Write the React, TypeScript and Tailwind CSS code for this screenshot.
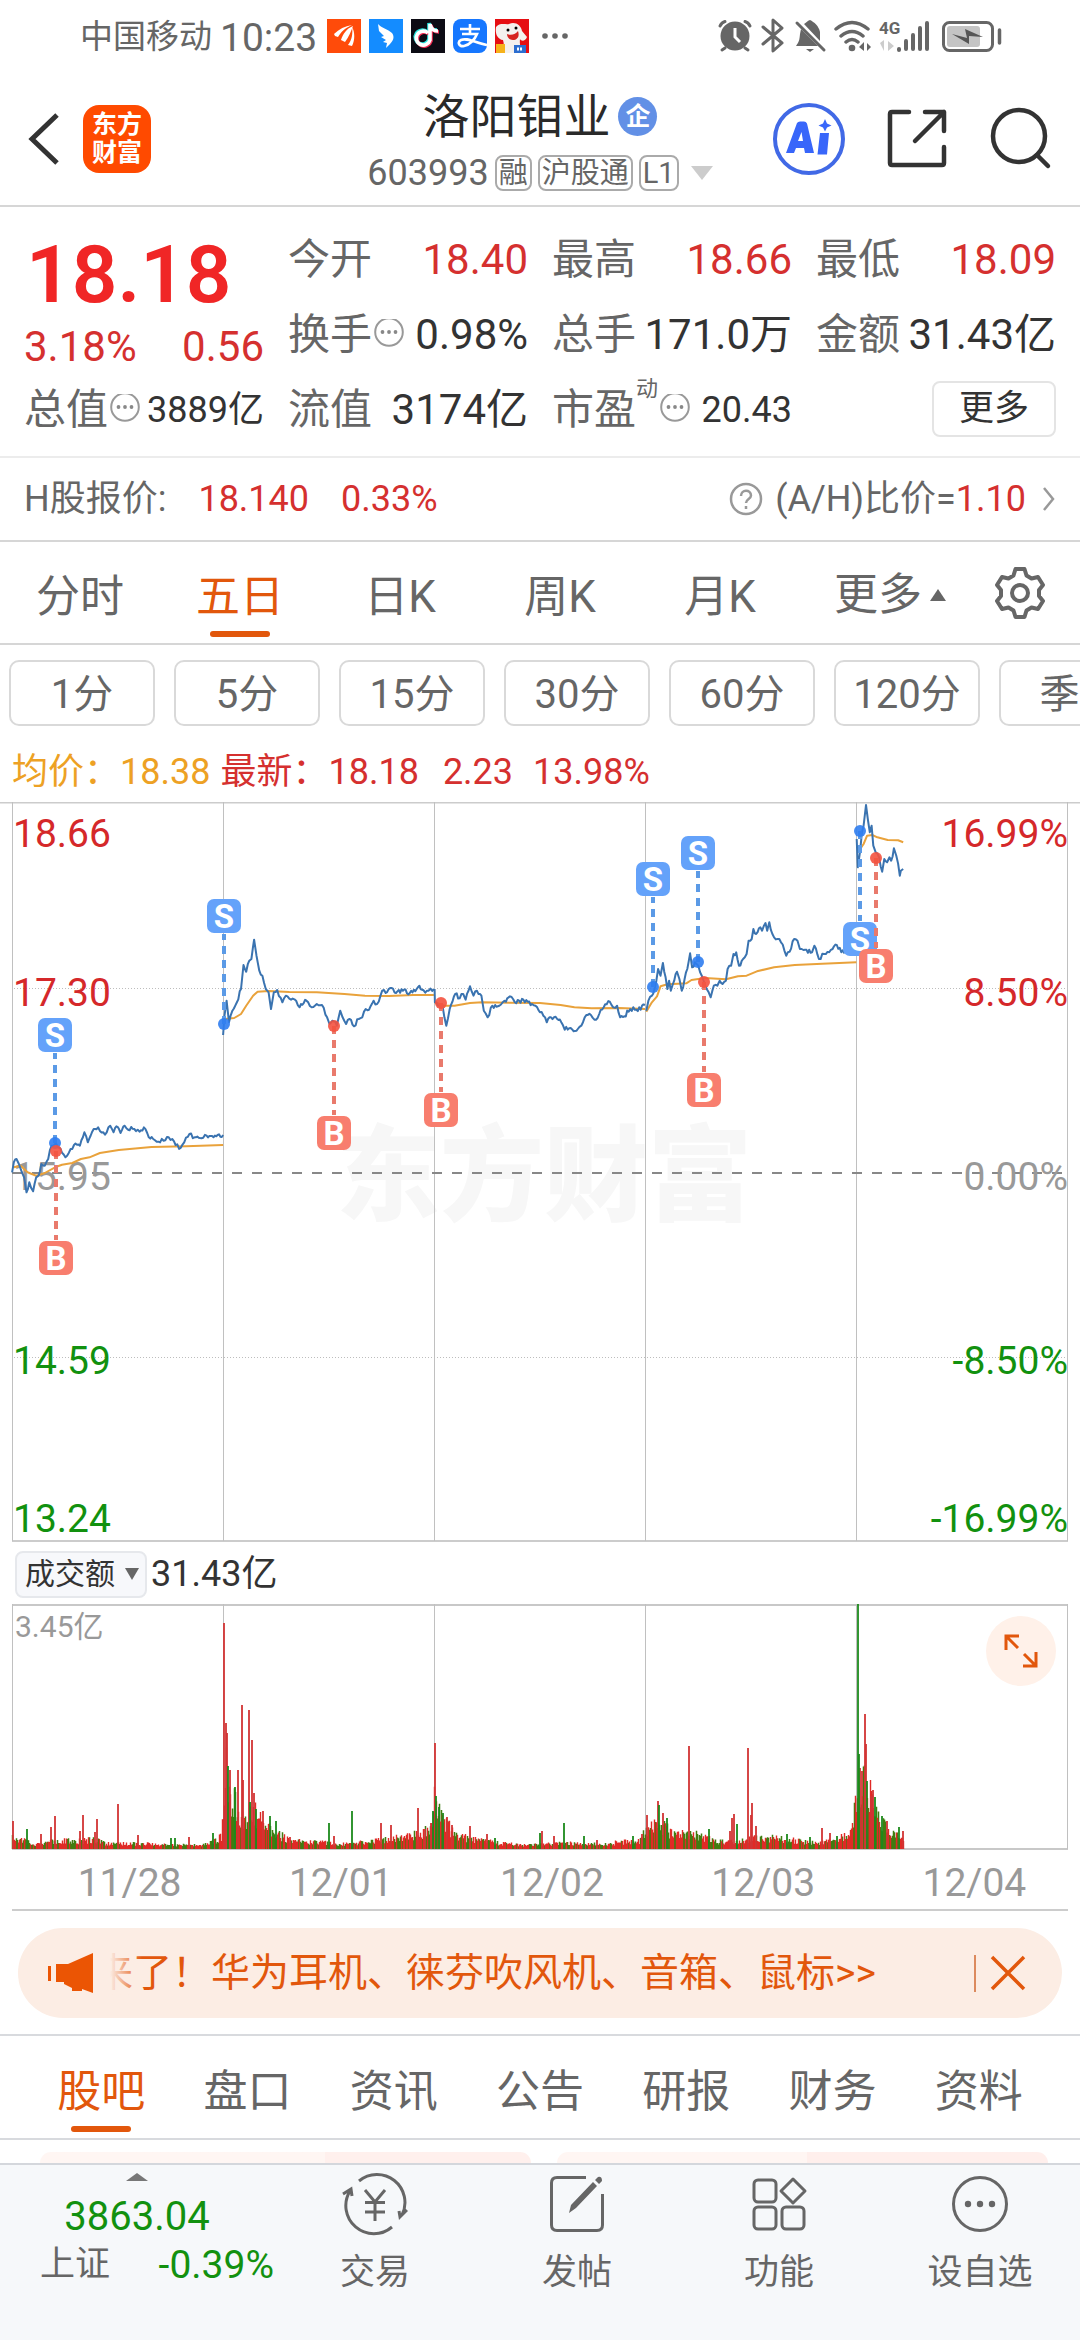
import React, { useMemo, useState } from "react";

type Pt = [number, number];

/* Price series: x and y on the plotting grid, one list for each trading day. */
const GX = 2.904;
const GY = 3;

const PRICE: Pt[][] = [
  [[35,1150],[40,1120],[48,1110],[55,1125],[62,1145],[70,1165],[77,1210],[85,1180],[96,1207],[105,1165],[112,1160],[120,1125],[130,1130],[140,1110],[150,1070],[160,1065],[168,1075],[175,1078],[190,1105],[205,1080],[215,1068],[232,1070],[245,1030],[255,1060],[272,1020],[285,1015],[300,1030],[310,1030],[320,1010],[330,1030],[338,1012],[350,1032],[362,1010],[372,1022],[390,1020],[405,1028],[418,1015],[432,1045],[445,1050],[460,1058],[475,1055],[485,1044],[500,1050],[510,1068],[525,1076],[535,1060],[550,1035],[565,1045],[585,1048],[600,1040],[620,1045],[632,1038],[648,1038]],
  [[648,738],[652,680],[658,635],[665,700],[675,665],[688,640],[700,600],[707,528],[715,548],[724,515],[730,510],[738,452],[745,500],[753,545],[762,560],[772,600],[780,610],[787,660],[795,610],[805,603],[820,640],[830,620],[845,632],[860,635],[870,655],[890,635],[905,655],[920,645],[935,648],[950,685],[957,705],[965,695],[978,710],[988,665],[995,685],[1005,705],[1015,690],[1028,712],[1042,690],[1052,685],[1062,660],[1072,662],[1085,635],[1095,645],[1110,605],[1120,612],[1137,597],[1150,612],[1170,605],[1190,612],[1210,600],[1218,590],[1230,604],[1245,605],[1260,600]],
  [[1262,600],[1263,640],[1275,650],[1285,650],[1296,710],[1306,660],[1322,615],[1335,628],[1345,615],[1352,632],[1365,592],[1375,620],[1385,605],[1398,620],[1405,665],[1416,685],[1430,650],[1450,650],[1465,635],[1481,622],[1495,640],[1520,632],[1545,645],[1560,655],[1568,670],[1578,680],[1588,700],[1600,685],[1618,690],[1630,700],[1640,722],[1653,718],[1666,727],[1678,720],[1688,710],[1698,685],[1716,678],[1726,692],[1740,675],[1753,655],[1771,638],[1781,655],[1792,650],[1801,685],[1813,682],[1830,660],[1848,662],[1873,648]],
  [[1877,665],[1883,635],[1893,620],[1901,600],[1911,540],[1918,560],[1925,522],[1933,565],[1938,600],[1943,575],[1948,605],[1958,575],[1966,548],[1973,570],[1980,605],[1988,570],[1996,540],[2004,493],[2010,535],[2018,520],[2028,530],[2038,560],[2048,590],[2058,610],[2064,625],[2073,590],[2083,590],[2090,575],[2098,585],[2108,575],[2113,540],[2123,530],[2130,495],[2138,490],[2146,530],[2158,510],[2168,495],[2174,455],[2183,450],[2188,420],[2196,435],[2208,415],[2213,425],[2223,402],[2228,425],[2234,400],[2243,435],[2258,450],[2268,460],[2283,500],[2293,488],[2306,450],[2316,455],[2323,480],[2338,482],[2358,490],[2365,470],[2378,510],[2393,495],[2408,490],[2418,480],[2430,468],[2443,490],[2463,480],[2478,475],[2487,470]],
  [[2488,150],[2491,235],[2498,185],[2503,130],[2508,110],[2515,48],[2520,90],[2526,130],[2531,110],[2536,170],[2543,190],[2553,205],[2562,248],[2568,210],[2576,220],[2583,205],[2588,215],[2596,178],[2603,200],[2613,260],[2616,245],[2623,240]],
];

const AVERAGE: Pt[][] = [
  [[40,1135],[60,1130],[80,1150],[105,1160],[130,1152],[160,1135],[180,1127],[210,1122],[235,1110],[260,1105],[290,1092],[345,1083],[440,1074],[540,1072],[648,1068]],
  [[652,690],[680,687],[700,675],[715,650],[735,620],[748,608],[780,606],[840,609],[920,610],[1000,615],[1060,620],[1130,621],[1200,618],[1260,618]],
  [[1262,640],[1290,650],[1320,650],[1365,642],[1400,640],[1480,641],[1568,642],[1628,648],[1668,655],[1718,658],[1798,657],[1873,660]],
  [[1877,668],[1893,640],[1908,622],[1918,592],[1938,586],[1968,584],[1993,583],[2008,573],[2048,567],[2108,571],[2143,562],[2168,560],[2198,547],[2248,535],[2308,528],[2388,524],[2487,520]],
  [[2498,180],[2508,165],[2518,140],[2533,138],[2548,145],[2578,153],[2608,154],[2623,160]],
];

function random(seed: number) {
  let s = seed;
  return () => {
    s = (s * 1664525 + 1013904223) % 4294967296;
    return s / 4294967296;
  };
}

function linePath(points: Pt[], jitter: number, seed: number) {
  const rnd = random(seed);
  const out: string[] = [];
  points.forEach(([x, y], i) => {
    out.push(`${i ? "L" : "M"}${(x / GX).toFixed(1)} ${(y / GY - 13).toFixed(1)}`);
    const next = points[i + 1];
    if (next && jitter) {
      const n = Math.floor((next[0] - x) / 4);
      for (let k = 1; k < n; k++) {
        const t = k / n;
        const px = x + (next[0] - x) * t;
        const py = y + (next[1] - y) * t + (rnd() - 0.5) * jitter;
        out.push(`L${(px / GX).toFixed(1)} ${(py / GY - 13).toFixed(1)}`);
      }
    }
  });
  return out.join("");
}

/* Volume: the usual level along the axis, then the single tall bars. */
const LEVEL: Pt[] = [[12,12],[27,9],[35,5],[60,9],[75,8],[95,10],[110,5],[140,6],[170,4],[200,4],[215,8],[222,14],[226,85],[230,60],[240,35],[245,30],[252,40],[262,28],[275,18],[290,8],[320,7],[345,5],[380,9],[410,13],[430,20],[434,50],[440,38],[447,26],[455,14],[470,11],[500,6],[530,4],[560,6],[600,5],[640,9],[650,25],[660,28],[670,18],[685,15],[700,14],[715,8],[740,8],[760,12],[785,10],[820,6],[850,14],[856,50],[866,70],[872,50],[880,28],[890,16],[904,12]];

const SPIKES: [number, number, "r" | "g"][] = [
  [13,28,"r"],[27,20,"g"],[41,15,"r"],[51,22,"r"],[55,33,"r"],[80,18,"r"],[83,34,"r"],[95,17,"r"],[97,30,"r"],[118,45,"r"],[138,14,"r"],[171,11,"g"],[175,11,"g"],[189,12,"r"],[213,16,"g"],
  [224,226,"r"],[226,126,"r"],[227,116,"r"],[228,83,"g"],[230,79,"r"],[235,62,"g"],[238,79,"r"],[242,144,"r"],[243,69,"r"],[249,139,"r"],[250,47,"g"],[252,109,"r"],[254,56,"r"],[256,40,"g"],[263,38,"r"],[270,33,"g"],[276,28,"g"],[290,12,"r"],[329,26,"g"],[334,13,"r"],[352,38,"g"],[381,26,"r"],[391,24,"r"],[418,41,"r"],[425,20,"r"],[431,26,"r"],[433,38,"g"],
  [435,106,"r"],[436,53,"g"],[439,42,"g"],[443,36,"g"],[447,32,"r"],[452,24,"r"],[470,23,"r"],[487,15,"r"],[495,11,"g"],[540,16,"g"],[542,18,"r"],[554,13,"r"],[564,26,"g"],[584,13,"g"],[597,9,"r"],[633,13,"g"],[642,15,"r"],
  [647,34,"r"],[658,48,"r"],[659,44,"g"],[663,36,"r"],[667,31,"g"],[689,103,"r"],[709,20,"g"],[730,18,"r"],[732,31,"r"],[734,35,"r"],[737,25,"g"],[748,101,"r"],[751,34,"r"],[752,46,"r"],[756,23,"r"],[787,15,"g"],[810,12,"g"],[822,21,"r"],[830,16,"r"],[837,13,"g"],
  [858,245,"g"],[859,95,"g"],[860,81,"r"],[862,78,"r"],[865,135,"r"],[866,105,"r"],[867,68,"g"],[871,53,"r"],[873,59,"r"],[875,52,"g"],[882,33,"g"],[887,28,"r"],[899,22,"g"],[903,18,"r"],
];

function volumePaths() {
  const rnd = random(17);
  let red = "";
  let green = "";
  let k = 0;
  let up = true;
  for (let x = 12.5; x < 904; x += 1) {
    while (k < LEVEL.length - 2 && LEVEL[k + 1][0] < x) k++;
    const [x0, h0] = LEVEL[k];
    const [x1, h1] = LEVEL[k + 1];
    const level = h0 + ((h1 - h0) * (x - x0)) / (x1 - x0);
    if (rnd() < (up ? 0.35 : 0.5)) up = !up;
    const h = Math.max(2, level * (0.55 + rnd() * 0.75));
    const seg = `M${x} 245V${(245 - h).toFixed(1)}`;
    if (up) red += seg;
    else green += seg;
  }
  let redTall = "";
  let greenTall = "";
  SPIKES.forEach(([x, h, c]) => {
    const seg = `M${x} 245V${245 - h}`;
    if (c === "r") redTall += seg;
    else greenTall += seg;
  });
  return { red, green, redTall, greenTall };
}

const COLUMNS = [12.5, 223.5, 434.5, 645.5, 856.5, 1067.5];

const MARKS: { kind: "S" | "B"; x: number; box: number; dot: number }[] = [
  { kind: "S", x: 55, box: 233, dot: 341 },
  { kind: "B", x: 56, box: 456, dot: 349 },
  { kind: "S", x: 224, box: 114, dot: 222 },
  { kind: "B", x: 334, box: 331, dot: 224 },
  { kind: "B", x: 441, box: 308, dot: 201 },
  { kind: "S", x: 653, box: 77, dot: 185 },
  { kind: "S", x: 698, box: 51, dot: 160 },
  { kind: "B", x: 704, box: 288, dot: 180 },
  { kind: "S", x: 860, box: 137, dot: 29 },
  { kind: "B", x: 876, box: 164, dot: 56 },
];

const SCALE: { y: number; price: string; rate: string; color: string }[] = [
  { y: 45, price: "18.66", rate: "16.99%", color: "#d5282a" },
  { y: 204, price: "17.30", rate: "8.50%", color: "#d5282a" },
  { y: 388, price: "15.95", rate: "0.00%", color: "#999999" },
  { y: 572, price: "14.59", rate: "-8.50%", color: "#12910f" },
  { y: 730, price: "13.24", rate: "-16.99%", color: "#12910f" },
];

function PriceChart() {
  return (
    <svg viewBox="0 0 1080 740" className="block h-auto w-full" role="img" aria-label="五日走势">
      <text x="544" y="411" textAnchor="middle" fontSize="104" fontWeight="900" fill="#f7f7f7">东方财富</text>
      <path d="M0 .5H1080M12 739H1068" stroke="#cccccc" strokeWidth="2" />
      {COLUMNS.map((x) => (
        <path key={x} d={`M${x} 0V739`} stroke="#c0c0c0" strokeWidth="1" />
      ))}
      <path d="M14 186.5H1067M14 555.5H1067" stroke="#bdbdbd" strokeDasharray="1 2" />
      <path d="M12 371H1068" stroke="#888888" strokeWidth="2" strokeDasharray="10 10" />
      <g fontSize="39">
        {SCALE.map((s) => (
          <React.Fragment key={s.price}>
            <text x="13" y={s.y} fill={s.color}>{s.price}</text>
            <text x="1068" y={s.y} textAnchor="end" fill={s.color}>{s.rate}</text>
          </React.Fragment>
        ))}
      </g>
      {AVERAGE.map((p, i) => (
        <path key={i} d={linePath(p, 0, 1)} fill="none" stroke="#e9a23b" strokeWidth="2" strokeLinejoin="round" />
      ))}
      {PRICE.map((p, i) => (
        <path key={i} d={linePath(p, 14, i + 3)} fill="none" stroke="#3a73b0" strokeWidth="2" strokeLinejoin="round" />
      ))}
      {MARKS.map((m, i) => {
        const sell = m.kind === "S";
        const edge = m.box < m.dot ? m.box + 18 : m.box - 18;
        return (
          <g key={i}>
            <path d={`M${m.x} ${m.dot}V${edge}`} stroke={sell ? "#5b9ae6" : "#e97a6c"} strokeWidth="4" strokeDasharray="8 6" />
            <circle cx={m.x} cy={m.dot} r="6" fill={sell ? "#2f7df0" : "#f4523f"} fillOpacity="0.9" />
            <rect x={m.x - 17} y={m.box - 17} width="34" height="34" rx="7" fill={sell ? "#64a2fa" : "#f87e6e"} />
            <text x={m.x} y={m.box + 12} textAnchor="middle" fontSize="33" fontWeight="700" fill="#ffffff">{m.kind}</text>
          </g>
        );
      })}
    </svg>
  );
}

function VolumeChart() {
  const v = useMemo(volumePaths, []);
  return (
    <svg viewBox="0 0 1080 246" className="block h-auto w-full" role="img" aria-label="成交额">
      <path d="M12 1H1068M12 245H1068" stroke="#c8c8c8" strokeWidth="2" />
      {COLUMNS.map((x) => (
        <path key={x} d={`M${x} 0V245`} stroke="#c0c0c0" strokeWidth="1" />
      ))}
      <text x="15" y="33" fontSize="30" fill="#999999">3.45亿</text>
      <path d={v.green} stroke="#3f7d10" strokeWidth="1.5" />
      <path d={v.red} stroke="#e02a26" strokeWidth="1.4" />
      <path d={v.redTall} stroke="#d23434" strokeWidth="1.8" />
      <path d={v.greenTall} stroke="#1c8a1c" strokeWidth="1.8" />
    </svg>
  );
}

function InfoDot() {
  return (
    <svg viewBox="0 0 32 32" className="size-8 shrink-0" aria-hidden="true">
      <circle cx="17" cy="13" r="13.8" fill="none" stroke="#999" strokeWidth="2" />
      <g fill="#888"><circle cx="10.5" cy="13" r="1.9" /><circle cx="17" cy="13" r="1.9" /><circle cx="23.5" cy="13" r="1.9" /></g>
    </svg>
  );
}

function Cell({ label, value, tone = "text-[#333333]", info, sup, small }: { label: string; value: string; tone?: string; info?: boolean; sup?: string; small?: boolean }) {
  return (
    <div className="flex items-center pt-0.5">
      <span className="text-[#666666]">{label}</span>
      {sup && <span className="self-start pt-1 text-[22px] leading-6 text-[#666666]">{sup}</span>}
      {info && <InfoDot />}
      <span className={small ? `ml-auto text-4xl ${tone}` : `ml-auto ${tone}`}>{value}</span>
    </div>
  );
}

function StatusBar() {
  return (
    <div className="flex h-[72px] items-center justify-between pr-[76px] pl-20 text-[#666666]">
      <div className="flex items-center">
        <span className="text-[33px]">中国移动</span>
        <span className="ml-2 pt-1 text-[39px]">10:23</span>
        <div className="ml-2.5 flex items-center gap-2">
          <svg viewBox="0 0 34 34" className="size-[34px]"><rect width="34" height="34" fill="#ff4b0a" /><path d="M7 15C12 10 18 7 25 6 18 9 14 13 11 18L8 17ZM14 21C16 15 19 10 26 7 24 12 22 18 18 23ZM21 26C25 21 26 14 25 8 28 13 28 21 25 27Z" fill="#fff" /></svg>
          <svg viewBox="0 0 34 34" className="size-[34px]"><rect width="34" height="34" fill="#148cff" /><path d="M9 5C12 9 19 10 23 14 26 18 24 22 21 25L17 29 18 24 14 23 17 21 12 18 15 17 10 12Z" fill="#fff" /></svg>
          <svg viewBox="0 0 34 34" className="size-[34px]"><rect width="34" height="34" fill="#0c0b14" /><g fill="none" strokeWidth="3.6"><path d="M17 14A7 7 0 1 0 19 21V5C20 10 23 12 27 12" stroke="#2ae6e0" transform="translate(-1 -1)" /><path d="M17 14A7 7 0 1 0 19 21V5C20 10 23 12 27 12" stroke="#f42c54" transform="translate(1 1)" /><path d="M17 14A7 7 0 1 0 19 21V5C20 10 23 12 27 12" stroke="#fff" /></g></svg>
          <svg viewBox="0 0 34 34" className="size-[34px]"><rect width="34" height="34" rx="8" fill="#1677ff" /><path d="M7 10H27M17 5V15M9 15H24C22 20 17 26 11 27 6 28 4 23 8 21 14 18 22 24 34 26" fill="none" stroke="#fff" strokeWidth="2.6" /></svg>
          <svg viewBox="0 0 34 34" className="size-[34px]"><rect width="34" height="34" fill="#e60e12" /><path d="M1 8C5 3 11 6 14 5 20 2 26 6 27 12L32 18C30 23 26 22 25 20 24 30 28 30 28 34H9C9 28 9 24 8 21 2 20 0 14 1 8Z" fill="#f4f1ee" /><path d="M12 15C16 17 21 15 23 12 25 18 22 21 18 21 14 21 12 18 12 15Z" fill="#d6231f" /><circle cx="13" cy="11" r="1.5" /><circle cx="21" cy="9" r="1.5" /><rect x="1" y="25" width="9" height="9" fill="#f6b21b" /><rect x="19" y="26" width="12" height="8" fill="#2c6ed0" /><path d="M22 30H28" stroke="#fff" strokeWidth="3" strokeDasharray="2 1" /></svg>
        </div>
        <svg viewBox="0 0 30 8" className="ml-3 h-2 w-[30px]" fill="#666"><circle cx="4" cy="4" r="2.8" /><circle cx="14" cy="4" r="2.8" /><circle cx="24" cy="4" r="2.8" /></svg>
      </div>
      <svg viewBox="716 16 288 40" className="h-10 w-72" fill="none" stroke="#666" strokeWidth="3" strokeLinecap="round">
        <circle cx="735" cy="36" r="14.5" fill="#666" stroke="none" />
        <path d="M735 28V37L740 42" stroke="#fff" strokeLinecap="butt" />
        <path d="M720 26C721 24 723 22 725 21.500M745 21.500C747 22 749 24 750 26M725 48L722 50M745 48L748 50" />
        <path d="M763 27L782 43 773 51V20L782 28 763 44" strokeLinejoin="round" />
        <path d="M797 23L824 50" />
        <path d="M801 29L818 46H796C799 42 799.500 40 800 34ZM804 24C807 22 807 21 810 20 814 22 819 26 820 32V41Z" fill="#666" stroke="none" />
        <path d="M806 49H814L810 52Z" fill="#666" stroke="none" />
        <path d="M836 29Q852 16 868 29M841 36Q852 27 863 36M846 42Q852 37 858 42" strokeWidth="3.500" />
        <circle cx="852" cy="48" r="3.300" fill="#666" stroke="none" />
        <path d="M859 47L864 42V51ZM871 47L867 43V51Z" fill="#666" stroke="none" />
        <text x="879" y="34" fontSize="17" fontWeight="700" fill="#666" stroke="none">4G</text>
        <path d="M880 43L884 40V51ZM894 46L888 41V51Z" fill="#ccc" stroke="none" />
        <path d="M899 50V49M906 49V41M913 49V35M920 49V28M927 49V23" strokeWidth="4" />
        <rect x="943.500" y="22.500" width="49" height="28" rx="6" strokeWidth="3" />
        <rect x="947" y="26" width="33" height="21" rx="3" fill="#c4c4c4" stroke="none" />
        <path d="M952 34L967 38 965 29 983 37 969 36 969 44Z" fill="#555" stroke="none" />
        <path d="M999.500 30V43" strokeWidth="3.500" />
      </svg>
    </div>
  );
}

function Header() {
  return (
    <header className="grid h-[135px] grid-cols-[1fr_auto_1fr] items-center border-b-2 border-[#d6d6d6] px-[26px]">
      <div className="flex items-center">
        <button aria-label="返回" className="flex w-[57px] items-center">
          <svg viewBox="0 0 40 60" className="h-[60px] w-10"><path d="M31 6L6 30 31 54" fill="none" stroke="#333" strokeWidth="5" /></svg>
        </button>
        <div className="flex size-[68px] flex-col items-center justify-center rounded-2xl bg-[#ff4a00] text-[25px] leading-7 font-bold text-white">
          <span>东方</span><span>财富</span>
        </div>
      </div>
      <div className="flex flex-col items-center pt-3.5">
        <h1 className="flex items-center gap-2 text-[47px] leading-[54px] text-[#2a2a2a]">
          洛阳钼业
          <span className="flex size-[39px] items-center justify-center rounded-full bg-[#6290e6] text-[25px] leading-none font-bold text-white">企</span>
        </h1>
        <div className="flex h-[58px] items-center gap-1.5 text-[29px] leading-8 text-[#666666]">
          <span className="text-4xl">603993</span>
          <span className="rounded-lg border-2 border-[#aaaaaa] px-0.5">融</span>
          <span className="rounded-lg border-2 border-[#aaaaaa] px-0.5">沪股通</span>
          <span className="rounded-lg border-2 border-[#aaaaaa] px-0.5">L1</span>
          <svg viewBox="0 0 22 14" className="ml-1.5 h-3.5 w-[22px]"><path d="M0 0H22L11 14Z" fill="#ccc" /></svg>
        </div>
      </div>
      <div className="flex items-center justify-end gap-[38px]">
        <button aria-label="AI" className="size-[74px]">
          <svg viewBox="0 0 74 74" className="size-full">
            <circle cx="37" cy="37" r="34" fill="none" stroke="#4169e6" strokeWidth="4" />
            <path d="M14 51L25 21Q26 19.500 28 19.500H32Q34 19.500 35 21.500L42 51H33L32 46H24L22 51ZM26 39H31L29.500 30ZM48 31H57L55 52.500H45.500ZM53 17L55 21.500 59.500 23.500 55 25.500 53 29.500 51 25.500 46.500 23.500 51 21.500Z" fill="#3866fa" />
          </svg>
        </button>
        <button aria-label="分享" className="size-[66px]">
          <svg viewBox="0 0 66 66" className="size-full" fill="none" stroke="#333" strokeWidth="4.500" strokeLinecap="round" strokeLinejoin="round"><path d="M25 6H8Q6 6 6 8V57Q6 59 8 59H58Q60 59 60 57V41M41 6H60V25M60 6L31 35" /></svg>
        </button>
        <button aria-label="搜索" className="size-[66px]">
          <svg viewBox="0 0 66 66" className="size-full" fill="none" stroke="#333" strokeWidth="4.500" strokeLinecap="round"><circle cx="31" cy="30" r="26" /><path d="M49 49L60 60" /></svg>
        </button>
      </div>
    </header>
  );
}

const PERIODS = ["分时", "五日", "日K", "周K", "月K"];
const MINUTES = ["1分", "5分", "15分", "30分", "60分", "120分", "季K"];
const SECTIONS = ["股吧", "盘口", "资讯", "公告", "研报", "财务", "资料"];
const DATES = ["11/28", "12/01", "12/02", "12/03", "12/04"];

function Tab({ label, active, onClick }: { label: string; active: boolean; onClick: () => void }) {
  return (
    <button onClick={onClick} className={active ? "flex h-full flex-col items-center justify-end pb-1.5 text-[#e2570c]" : "flex h-full flex-col items-center justify-end pb-1.5 text-[#666666]"}>
      <span>{label}</span>
      <span className={active ? "mt-3 h-1.5 w-[60px] rounded-full bg-[#e2570c]" : "mt-3 h-1.5 w-[60px]"} />
    </button>
  );
}

const NAV_ICON = "size-[66px]";

export default function App() {
  const [period, setPeriod] = useState("五日");
  const [section, setSection] = useState("股吧");
  return (
    <div className="flex min-h-screen w-full flex-col overflow-x-hidden bg-white font-[Roboto,'Noto_Sans_CJK_SC',sans-serif] leading-none text-[#333333]">
      <StatusBar />
      <Header />

      <section className="grid auto-rows-[75px] grid-cols-4 gap-x-6 border-b-2 border-[#ececec] px-6 pt-3.5 pb-2.5 text-[42px]">
        <div className="row-span-2 flex flex-col text-[#d5302f]">
          <div className="flex h-[100px] items-center pt-2 pl-0.5 text-[80px] font-semibold text-[#f02626]">18.18</div>
          <div className="flex h-[50px] items-center justify-between pt-0.5"><span>3.18%</span><span>0.56</span></div>
        </div>
        <Cell label="今开" value="18.40" tone="text-[#d5302f]" />
        <Cell label="最高" value="18.66" tone="text-[#d5302f]" />
        <Cell label="最低" value="18.09" tone="text-[#d5302f]" />
        <Cell label="换手" value="0.98%" info />
        <Cell label="总手" value="171.0万" />
        <Cell label="金额" value="31.43亿" />
        <Cell label="总值" value="3889亿" info small />
        <Cell label="流值" value="3174亿" />
        <Cell label="市盈" value="20.43" info sup="动" small />
        <div className="flex items-center justify-end">
          <button className="h-[56px] w-[124px] rounded-lg border-2 border-[#e4e4e4] text-[35px]">更多</button>
        </div>
      </section>

      <section className="flex h-[84px] items-center border-b-2 border-[#d6d6d6] px-6 text-4xl text-[#666666]">
        <span>H股报价:</span>
        <span className="ml-8 text-[#d5302f]">18.140</span>
        <span className="ml-8 text-[#d5302f]">0.33%</span>
        <a href="#ratio" className="ml-auto flex items-center">
          <svg viewBox="0 0 34 34" className="mr-3 size-[34px]" fill="none" stroke="#999" strokeWidth="2.500"><circle cx="17" cy="17" r="15" /><path d="M12 14C12 7 22 7 22 13.500 22 17 17 17 17 21M17 24V27" /></svg>
          (A/H)比价=<span className="text-[#d5302f]">1.10</span>
          <svg viewBox="0 0 14 26" className="ml-4 h-[26px] w-3.5"><path d="M2 2L11 13 2 24" fill="none" stroke="#999" strokeWidth="2.500" /></svg>
        </a>
      </section>

      <nav className="flex h-[103px] items-center border-b-2 border-[#d6d6d6] text-[44px]">
        <div className="grid h-full flex-8 grid-cols-6">
          {PERIODS.map((p) => (
            <Tab key={p} label={p} active={p === period} onClick={() => setPeriod(p)} />
          ))}
          <button className="flex items-center justify-center gap-2 pt-1 pl-5 text-[#666666]">
            更多
            <svg viewBox="0 0 16 12" className="h-3 w-4"><path d="M0 12H16L8 0Z" fill="#666" /></svg>
          </button>
        </div>
        <button aria-label="设置" className="flex flex-1 justify-center">
          <svg viewBox="0 0 54 54" className="size-[54px]" fill="none" stroke="#666" strokeWidth="4" strokeLinejoin="round">
            <path d="M22.500 3H31.500L33.500 9.500 38.500 12.500 45 11 50 19 46 24V30L50 35 45 43 38.500 41.500 33.500 44.500 31.500 51H22.500L20.500 44.500 15.500 41.500 9 43 4 35 8 30V24L4 19 9 11 15.500 12.500 20.500 9.500Z" /><circle cx="27" cy="27" r="8" />
          </svg>
        </button>
      </nav>

      <div className="flex gap-[19px] overflow-hidden pt-[15px] pl-[9px]">
        {MINUTES.map((m) => (
          <button key={m} className="h-[66px] w-[146px] shrink-0 rounded-[10px] border-2 border-[#d9d9d9] pt-1 text-[40px] text-[#666666]">{m}</button>
        ))}
      </div>

      <div className="flex h-[76px] items-end pb-2.5 pl-3 text-4xl text-[#d5302f]">
        <span className="text-[#eda124]">均价：</span>
        <span className="text-[#eda124]">18.38</span>
        <span className="ml-2.5">最新：</span>
        <span>18.18</span>
        <span className="ml-6">2.23</span>
        <span className="ml-5">13.98%</span>
      </div>

      <PriceChart />

      <div className="flex h-[62px] items-center pt-0.5 pl-[15px]">
        <label className="relative flex items-center">
          <select aria-label="指标" className="h-[47px] w-[132px] appearance-none rounded-lg border-2 border-[#e6e8ec] bg-[#f7f8fb] pl-2 text-[30px] leading-none">
            <option>成交额</option>
            <option>成交量</option>
          </select>
          <svg viewBox="0 0 14 12" className="pointer-events-none absolute right-2 h-3 w-3.5"><path d="M0 0H14L7 12Z" fill="#666" /></svg>
        </label>
        <span className="ml-1 text-4xl">31.43亿</span>
      </div>

      <div className="relative">
        <VolumeChart />
        <button aria-label="全屏" className="absolute top-3 right-6 flex size-[70px] items-center justify-center rounded-full bg-[#fff1e9]">
          <svg viewBox="0 0 36 36" className="size-9" fill="none" stroke="#e2570c" strokeWidth="3"><path d="M16 3H3V17M3 3L15 15M20 33H33V19M33 33L21 21" /></svg>
        </button>
      </div>

      <div className="mx-3 border-b-2 border-[#cccccc]">
        <div className="-mr-3 grid h-[59px] grid-cols-5 items-center pt-2 pl-3 text-center text-[39px] text-[#999999]">
          {DATES.map((d) => (
            <span key={d}>{d}</span>
          ))}
        </div>
      </div>

      <div className="mx-[18px] mt-[17px] flex h-[90px] items-center rounded-full bg-[#fcede4] pr-9 pl-[30px] text-[39px] text-[#e2570c]">
        <svg viewBox="0 0 46 42" className="h-[42px] w-[46px] shrink-0" fill="#eb5504"><rect x="0" y="14" width="3" height="15" /><path d="M8 12H20L45 1V41L34 37V39H24V36L16 32V30H8Z" /></svg>
        <a href="#promo" className="relative ml-4 flex min-w-0 flex-1 justify-start overflow-hidden leading-[50px] whitespace-nowrap">
          <span className="-ml-4">来了！华为耳机、徕芬吹风机、音箱、鼠标&gt;&gt;</span>
          <span className="absolute top-0 left-0 h-full w-8 bg-linear-to-r from-[#fcede4] to-transparent" />
        </a>
        <span className="h-[37px] w-0.5 bg-[#dc8a5e]" />
        <button aria-label="关闭" className="ml-3.5">
          <svg viewBox="0 0 36 36" className="size-9"><path d="M2 2L34 34M34 2L2 34" stroke="#e2570c" strokeWidth="3.500" /></svg>
        </button>
      </div>

      <nav className="mt-4 h-[106px] border-y-2 border-[#d8dade] px-7 text-[44px]">
        <div className="grid h-full grid-cols-7">
          {SECTIONS.map((s) => (
            <Tab key={s} label={s} active={s === section} onClick={() => setSection(s)} />
          ))}
        </div>
      </nav>

      <div className="grid grid-cols-2 gap-[26px] pt-3 pr-8 pl-10">
        <div className="h-[11px] rounded-t-[20px] bg-linear-to-r from-[#fff6f3] from-58% to-[#fff0ed] to-58%" />
        <div className="h-[11px] rounded-t-[20px] bg-linear-to-r from-[#fff6f3] from-51% to-[#ffefec] to-51%" />
      </div>

      <footer className="grid flex-1 grid-cols-[274fr_202fr_202fr_202fr_200fr] border-t-2 border-[#d4d7dc] bg-[#f6f8fa] pb-12 text-[35px] text-[#666666]">
        <button className="flex flex-col items-center pt-2">
          <svg viewBox="0 0 22 8" className="h-2 w-[22px]"><path d="M0 8H22L11 0Z" fill="#777" /></svg>
          <span className="mt-4 text-[40px] leading-10 text-[#12910f]">3863.04</span>
          <span className="mt-2 flex w-full items-center justify-between pl-10 leading-10"><span>上证</span><span className="text-[39px] text-[#12910f]">-0.39%</span></span>
        </button>
        <button className="flex flex-col items-center gap-[18px] pt-1.5">
          <svg viewBox="0 0 66 66" className={NAV_ICON} fill="none" stroke="#666" strokeWidth="3"><path d="M17 10A28 28 0 0 1 60 44M65 39L58 46 57 40M50 56A28 28 0 0 1 8 20M1 23L9 18 10 25M23 19L33 31 43 19M23 31.500H43M23 41H43M33 31V50" /></svg>
          <span>交易</span>
        </button>
        <button className="flex flex-col items-center gap-[18px] pt-1.5">
          <svg viewBox="0 0 66 66" className={NAV_ICON} fill="none" stroke="#666" strokeWidth="3"><path d="M42 6.500H13Q7.500 6.500 7.500 12V54Q7.500 59.500 13 59.500H53Q58.500 59.500 58.500 54V23" /><path d="M25 42L27 34 49 11 53 15 32 37ZM51 9L54 6Q58 5 58 10L55 13Z" fill="#666" stroke="none" /></svg>
          <span>发帖</span>
        </button>
        <button className="flex flex-col items-center gap-[18px] pt-1.5">
          <svg viewBox="0 0 66 66" className={NAV_ICON} fill="none" stroke="#666" strokeWidth="3" strokeLinejoin="round"><rect x="8" y="9" width="22" height="22" rx="4" /><rect x="8" y="36" width="22" height="22" rx="4" /><rect x="36" y="36" width="22" height="22" rx="4" /><path d="M47 8L59 20 47 32 35 20Z" /></svg>
          <span>功能</span>
        </button>
        <button className="flex flex-col items-center gap-[18px] pt-1.5">
          <svg viewBox="0 0 66 66" className={NAV_ICON} fill="none" stroke="#666" strokeWidth="3"><circle cx="33" cy="33" r="26.500" /><g fill="#666" stroke="none"><circle cx="21" cy="33" r="3.200" /><circle cx="33" cy="33" r="3.200" /><circle cx="45" cy="33" r="3.200" /></g></svg>
          <span>设自选</span>
        </button>
      </footer>
    </div>
  );
}
